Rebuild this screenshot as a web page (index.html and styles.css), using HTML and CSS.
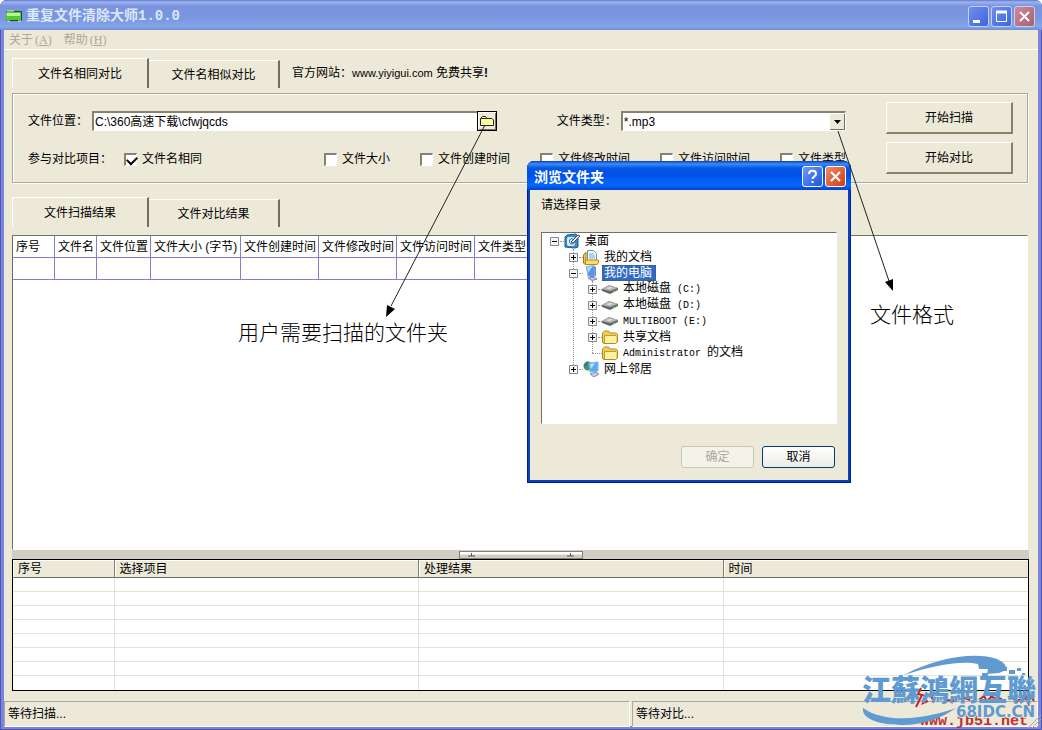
FILE: index.html
```html
<!DOCTYPE html>
<html lang="zh-CN">
<head>
<meta charset="utf-8">
<title>重复文件清除大师1.0.0</title>
<link rel="stylesheet" href="styles.css">
</head>
<body>
<div class="window">
  <header class="titlebar">
    <svg class="app-icon" width="16" height="12" viewBox="0 0 16 12"><rect x="0" y="1" width="16" height="10" rx="1" fill="#254c22"/><rect x="0" y="2" width="15" height="8" fill="#58c832"/><rect x="1" y="3" width="13" height="3" fill="#b8f49a"/><path d="M1 1h7M1 11h3M12 11h3" stroke="#d8ffd0"/></svg>
    <h1>重复文件清除大师1.0.0</h1>
    <div class="captions">
      <button class="cap" aria-label="最小化"><svg width="19" height="19"><path d="M4 14.500h7" stroke="#fff" stroke-width="3"/></svg></button>
      <button class="cap" aria-label="最大化"><svg width="19" height="19"><path d="M4.500 5v9.500h10V5" fill="none" stroke="#fff"/><path d="M4 5h11" stroke="#fff" stroke-width="3"/></svg></button>
      <button class="cap cap-close" aria-label="关闭"><svg width="19" height="19"><path d="M5 5l9 9M14 5l-9 9" stroke="#fff" stroke-width="2"/></svg></button>
    </div>
  </header>

  <div class="client">
    <nav class="menu">
      <button>关于<span class="key">(<u>A</u>)</span></button>
      <button>帮助<span class="key">(<u>H</u>)</span></button>
    </nav>

    <main class="content">
      <div class="tabs">
        <button class="tab active">文件名相同对比</button>
        <button class="tab">文件名相似对比</button>
        <p class="site">官方网站：<span class="latin">www.yiyigui.com</span> 免费共享<b>!</b></p>
      </div>

      <form class="group">
        <div class="fields">
          <div class="row">
            <label class="name" for="path">文件位置：</label>
            <input class="path" id="path" type="text" value="C:\360高速下载\cfwjqcds">
            <button class="browse" type="button" aria-label="浏览"><svg width="14" height="12" viewBox="0 0 14 12"><path d="M.5 10.500v-7l2-2h3l1.500 2h5l1.500 1.500v5.500z" fill="#ffff99" stroke="#222"/><path d="M1 3.500h7" stroke="#222"/></svg></button>
            <label class="name type" for="type">文件类型：</label>
            <div class="combo">
              <select id="type"><option>*.mp3</option></select>
              <span class="drop"><svg width="7" height="4"><path d="M0 0h7L3.500 4z"/></svg></span>
            </div>
          </div>
          <div class="checks">
            <span>参与对比项目：</span>
            <label><input type="checkbox" checked>文件名相同</label>
            <label><input type="checkbox">文件大小</label>
            <label><input type="checkbox">文件创建时间</label>
            <label><input type="checkbox">文件修改时间</label>
            <label><input type="checkbox">文件访问时间</label>
            <label><input type="checkbox">文件类型</label>
          </div>
        </div>
        <div class="actions">
          <button type="button">开始扫描</button>
          <button type="button">开始对比</button>
        </div>
      </form>

      <div class="tabs">
        <button class="tab active">文件扫描结果</button>
        <button class="tab">文件对比结果</button>
      </div>

      <section class="results">
        <table class="scan">
          <colgroup><col class="c42"><col class="c42"><col class="c54"><col class="c90"><col class="c78"><col class="c78"><col class="c78"><col class="c78"></colgroup>
          <tr><th>序号</th><th>文件名</th><th>文件位置</th><th>文件大小 (字节)</th><th>文件创建时间</th><th>文件修改时间</th><th>文件访问时间</th><th>文件类型</th></tr>
          <tr><td></td><td></td><td></td><td></td><td></td><td></td><td></td><td></td></tr>
        </table>
      </section>

      <div class="splitter"><div class="grip">
        <svg width="7" height="4"><path d="M3.500 0v3M0 3h7" stroke="#555"/></svg>
        <svg width="7" height="4"><path d="M3.500 0v3M0 3h7" stroke="#555"/></svg>
      </div></div>

      <table class="log">
        <colgroup><col class="p10"><col class="p30"><col class="p30"><col class="p30"></colgroup>
        <thead><tr><th>序号</th><th>选择项目</th><th>处理结果</th><th>时间</th></tr></thead>
        <tbody>
          <tr><td></td><td></td><td></td><td></td></tr>
          <tr><td></td><td></td><td></td><td></td></tr>
          <tr><td></td><td></td><td></td><td></td></tr>
          <tr><td></td><td></td><td></td><td></td></tr>
          <tr><td></td><td></td><td></td><td></td></tr>
          <tr><td></td><td></td><td></td><td></td></tr>
          <tr><td></td><td></td><td></td><td></td></tr>
          <tr><td></td><td></td><td></td><td></td></tr>
        </tbody>
      </table>
    </main>

    <footer class="status">
      <div class="scan-status">等待扫描...</div>
      <div class="compare-status">等待对比...</div>
    </footer>
  </div>

  <p class="note note-folder">用户需要扫描的文件夹</p>
  <p class="note note-format">文件格式</p>

  <section class="dialog" role="dialog" aria-labelledby="dlg-title">
    <header class="dlg-title">
      <h2 id="dlg-title">浏览文件夹</h2>
      <button class="cap cap-help" aria-label="帮助"><svg width="19" height="19"><path d="M6 7c0-4.500 7-4.500 7 0 0 2.500-3.500 2.500-3.500 5M9.500 14v2" fill="none" stroke="#fff" stroke-width="2"/></svg></button>
      <button class="cap cap-red" aria-label="关闭"><svg width="19" height="19"><path d="M5 5l9 9M14 5l-9 9" stroke="#fff" stroke-width="2"/></svg></button>
    </header>
    <div class="dlg-body">
      <p>请选择目录</p>
      <div class="tree">
        <ul class="root">
          <li>
            <div class="node"><button class="exp" aria-label="折叠"><svg width="9" height="9"><path d="M2 4.500h5" stroke="#000"/></svg></button>
              <svg class="ico" width="16" height="16"><path d="M3 2l9-1 2 2v11l-3 1-10-1V4z" fill="#3b8bc4" stroke="#1c5c92"/><rect x="3" y="4" width="8" height="9" rx="2" fill="#d8effb"/><path d="M9 6c-4-2-5 5-1 5 3 0 3-4 0-4" fill="none" stroke="#1c6ba8"/><path d="M7 9l7-7 2 1-7 7z" fill="#f4f4f4" stroke="#446"/></svg><span class="text">桌面</span></div>
            <ul>
              <li><div class="node"><button class="exp" aria-label="展开"><svg width="9" height="9"><path d="M2 4.500h5M4.500 2v5" stroke="#000"/></svg></button>
                <svg class="ico" width="16" height="16"><path d="M.5 6L3 3v9h12v2l-1 1.500H2L.5 14z" fill="#f3c93d" stroke="#a87810"/><path d="M4.500 1.500h6l3 3v8h-9z" fill="#f5fbff" stroke="#6d91b4"/><path d="M6 5h5M6 7h6M6 9h6" stroke="#74a6cc"/><path d="M2.500 11h13v2.500l-1.500 2H2.500z" fill="#f9dd70" stroke="#b58a1c"/></svg><span class="text">我的文档</span></div></li>
              <li><div class="node"><button class="exp" aria-label="折叠"><svg width="9" height="9"><path d="M2 4.500h5" stroke="#000"/></svg></button>
                <svg class="ico" width="16" height="16"><path d="M3 1.500L11 .5l1 10-7 1z" fill="#4a9ae8" stroke="#a4b8d8"/><path d="M4 2l6-1-5 7z" fill="#a8dcff"/><path d="M11 1l2 1v9l-1 0z" fill="#7c84ba"/><path d="M7 11l4-1 1 3-4 1z" fill="#7c84ba"/><path d="M5 13l6-1 3 2-5 1.500z" fill="#c4c8e8" stroke="#8088b4"/></svg><span class="text selected">我的电脑</span></div>
                <ul>
                  <li><div class="node"><button class="exp" aria-label="展开"><svg width="9" height="9"><path d="M2 4.500h5M4.500 2v5" stroke="#000"/></svg></button>
                    <svg class="ico" width="16" height="16"><path d="M0 8l7-4 9 3v2l-8 4-8-3z" fill="#666"/><path d="M0 8l7-4 9 3-8 3z" fill="#b4b4b4"/><path d="M4 7l4-1 3 1-4 1z" fill="#e4e4e4"/><path d="M11 11l3-1" stroke="#7ce05c"/></svg><span class="text">本地磁盘<span class="mono"> (C:)</span></span></div></li>
                  <li><div class="node"><button class="exp" aria-label="展开"><svg width="9" height="9"><path d="M2 4.500h5M4.500 2v5" stroke="#000"/></svg></button>
                    <svg class="ico" width="16" height="16"><path d="M0 8l7-4 9 3v2l-8 4-8-3z" fill="#666"/><path d="M0 8l7-4 9 3-8 3z" fill="#b4b4b4"/><path d="M4 7l4-1 3 1-4 1z" fill="#e4e4e4"/><path d="M11 11l3-1" stroke="#7ce05c"/></svg><span class="text">本地磁盘<span class="mono"> (D:)</span></span></div></li>
                  <li><div class="node"><button class="exp" aria-label="展开"><svg width="9" height="9"><path d="M2 4.500h5M4.500 2v5" stroke="#000"/></svg></button>
                    <svg class="ico" width="16" height="16"><path d="M0 8l7-4 9 3v2l-8 4-8-3z" fill="#666"/><path d="M0 8l7-4 9 3-8 3z" fill="#b4b4b4"/><path d="M4 7l4-1 3 1-4 1z" fill="#e4e4e4"/><path d="M11 11l3-1" stroke="#7ce05c"/></svg><span class="text"><span class="mono">MULTIBOOT (E:)</span></span></div></li>
                  <li><div class="node"><button class="exp" aria-label="展开"><svg width="9" height="9"><path d="M2 4.500h5M4.500 2v5" stroke="#000"/></svg></button>
                    <svg class="ico" width="16" height="16"><path d="M.5 13V4l2-2h4l1.500 2h6l1.500 1.500V13l-2 1.500h-12z" fill="#f0cf55" stroke="#b08a20"/><path d="M2.500 14V7h11.500v7z" fill="#fff0a0"/><path d="M2.500 14V6.500H14" fill="none" stroke="#c09a30"/></svg><span class="text">共享文档</span></div></li>
                  <li><div class="node"><span class="branch"></span>
                    <svg class="ico" width="16" height="16"><path d="M.5 13V4l2-2h4l1.500 2h6l1.500 1.500V13l-2 1.500h-12z" fill="#f0cf55" stroke="#b08a20"/><path d="M2.500 14V7h11.500v7z" fill="#fff0a0"/><path d="M2.500 14V6.500H14" fill="none" stroke="#c09a30"/></svg><span class="text"><span class="mono">Administrator </span>的文档</span></div></li>
                </ul>
              </li>
              <li><div class="node"><button class="exp" aria-label="展开"><svg width="9" height="9"><path d="M2 4.500h5M4.500 2v5" stroke="#000"/></svg></button>
                <svg class="ico" width="16" height="16"><circle cx="5" cy="5" r="4.500" fill="#3c9c50"/><path d="M1 5c3-1 3-3 4-4" stroke="#3570c8" stroke-width="2" fill="none"/><path d="M6 2l9-1v9l-8 1z" fill="#56aef0" stroke="#8cb0dc"/><path d="M7 3l5-1-4 6z" fill="#b4e4ff"/><path d="M7 13l6-2 3 2-5 3z" fill="#c8c8e8" stroke="#8888b8"/></svg><span class="text">网上邻居</span></div></li>
            </ul>
          </li>
        </ul>
      </div>
      <div class="dlg-buttons"><button disabled>确定</button><button class="default">取消</button></div>
    </div>
  </section>

  <svg class="arrows" width="1042" height="730">
    <path d="M485 125L391 306M838 131L889 281" stroke="#222" fill="none"/>
    <path d="M386 317l1-12 8 4zM893 291l-8-9 8-3z"/>
  </svg>

  <svg class="mark" width="180" height="76" viewBox="0 0 180 76">
    <path d="M59 34l-3 6 4 1-6 12M61 41l3 2-3 6 5-2M68 40l3 6M83 46l12 1M100 43l8 3M117 46l5-4 3 5 6-6M128 43l12 2M150 44l6 4M156 46l14-2 2 3M163 40l4 12" stroke="#d02020" stroke-width="2" fill="none"/>
    <text class="mark-url" x="58" y="71" fill="#c03030">www.jb51.net</text>
    <g fill="#5f9bd0">
      <path d="M42 21C72 5 108-2 132 4c9 3 13 7 12 12l-7 3-12 1 1-5h-9l-1-5C98 6 70 12 42 21z"/>
      <path d="M127 15h8v4h-8zM139 13h6v4h-6zM147 16h6v4h-6zM155 14h4v3h-4zM160 19h3v2h-3zM120 19h6v4h-6z"/>
      <path d="M1 54c14 10 36 12 56 9 15-2 26-5 37-9-14 10-33 17-54 17C18 71-1 65 1 54z"/>
      <text class="mark-name" x="0" y="47">江蘇鴻網互聯</text>
      <text class="mark-domain" x="94" y="63" stroke="#ece9d8" stroke-width="2" paint-order="stroke">68IDC.CN</text>
    </g>
    <path d="M179 65l-9 9M179 69l-5 5M179 61l-13 13" stroke="#aca899"/>
  </svg>
</div>
</body>
</html>
```

FILE: styles.css
```css
* { box-sizing: border-box; }
body, p, h1, h2, ul { margin: 0; padding: 0; }
ul { list-style: none; }
body, button, input, select {
  font-family: "Liberation Sans", "Noto Sans CJK SC", sans-serif;
  font-size: 12px;
  line-height: 16px;
  color: #000;
}
button { padding: 0; background: #ece9d8; border: 0; }
svg { display: block; }

.window {
  position: relative;
  display: flex;
  flex-direction: column;
  min-height: 100vh;
  padding: 0 4px 4px;
  background: #7b84da;
  border-radius: 7px 7px 0 0;
  box-shadow: inset 0 0 0 1px #4d57b6;
  overflow: hidden;
}
.titlebar {
  display: flex;
  align-items: center;
  height: 30px;
  margin: 0 -4px;
  padding: 2px 7px 0 6px;
  gap: 4px;
  background: linear-gradient(#6377c8 0, #9cb4f0 2px, #7a93dd 6px, #7a96df 18px, #83a6e8 27px, #7288d2 30px);
}
.titlebar h1 {
  flex: 1;
  font: bold 14px/20px "Liberation Mono", "Noto Sans CJK SC", monospace;
  color: #dce6fb;
}
.captions { display: flex; gap: 2px; }
.cap {
  width: 21px;
  height: 21px;
  border: 1px solid #c5d0f5;
  border-radius: 3px;
  background: linear-gradient(135deg, #6f8df0, #3f66dd);
}
.cap-close { background: linear-gradient(135deg, #cc8c98, #a8606e); }
.cap-help { border-color: #fff; background: linear-gradient(135deg, #6c9bf8, #1f55d8); }
.cap-red { border-color: #fff; background: linear-gradient(135deg, #f08a68, #d03c14); }

.client { flex: 1; display: flex; flex-direction: column; background: #ece9d8; }
.menu {
  display: flex;
  gap: 12px;
  height: 20px;
  padding-left: 5px;
  border-bottom: 1px solid #fff;
}
.menu button { color: #aca899; }
.key { font-family: "Liberation Serif", serif; padding-left: 2px; }

.content { flex: 1; display: flex; flex-direction: column; padding: 8px 9px 10px 8px; }
.tabs { display: flex; align-items: flex-end; height: 30px; }
.tab {
  height: 28px;
  width: 131px;
  border: solid;
  border-width: 1px 2px 0 0;
  border-color: #fff #716f64 #fff #fff;
}
.tab.active { height: 30px; width: 137px; border-left-width: 1px; }
.site { align-self: center; padding-left: 12px; }
.latin { font-size: 11px; }

.group {
  display: flex;
  gap: 40px;
  margin: 5px 1px 14px 0;
  padding: 8px 14px 8px 15px;
  border: 1px solid #aca899;
  box-shadow: inset 1px 1px #fff, 1px 1px #fff;
}
.fields { flex: 1; padding-top: 9px; }
.row { display: flex; height: 20px; }
.name { width: 64px; line-height: 20px; }
.name.type { margin-left: 60px; }
.path, .combo {
  min-width: 0;
  border: 1px solid #fff;
  border-top: 2px solid #85836f;
  border-left: 2px solid #85836f;
  background: #fff;
}
.path { flex: 384 1 0; padding: 0 1px; border-right: 0; outline: 0; }
.browse {
  display: grid;
  place-items: center;
  width: 20px;
  border: 1px solid #000;
  box-shadow: inset 1px 1px #fff, inset -1px -1px #716f64;
}
.combo { flex: 224 1 0; display: grid; grid-template-columns: 1fr 16px; }
.combo select {
  grid-area: 1 / 1 / 2 / 3;
  min-width: 0;
  padding: 0 1px;
  border: 0;
  appearance: none;
  background: #fff;
}
.drop {
  grid-area: 1 / 2;
  display: grid;
  place-items: center;
  pointer-events: none;
  background: #ece9d8;
  box-shadow: inset 1px 1px #fff, inset -1px -1px #716f64;
}
.checks {
  display: grid;
  grid-template-columns: 96px 200px 96px 120px 120px 120px 1fr;
  padding-top: 20px;
  white-space: nowrap;
}
.checks label { display: flex; align-items: center; gap: 5px; }
.checks input {
  appearance: none;
  width: 13px;
  height: 13px;
  margin: 0;
  border: 1px solid #fff;
  border-top: 2px solid #85836f;
  border-left: 2px solid #85836f;
  background: #fff;
}
.checks input:checked::before {
  content: "";
  display: block;
  width: 8px;
  height: 5px;
  margin: 1px;
  border: solid #000;
  border-width: 0 0 2px 2px;
  transform: rotate(-45deg);
}
.actions { display: flex; flex-direction: column; gap: 8px; width: 130px; }
.actions button {
  flex: 1;
  min-height: 32px;
  border: solid;
  border-width: 1px 2px 2px 1px;
  border-color: #fff #85836f #85836f #fff;
}

.results {
  flex: 1;
  margin: 8px 1px 0 0;
  background: #fff;
  border: 1px solid #fff;
  border-top-color: #716f64;
  border-left-color: #716f64;
}
.scan { table-layout: fixed; border-collapse: separate; border-spacing: 0; width: 540px; }
.c42 { width: 42px; }
.c54 { width: 54px; }
.c90 { width: 90px; }
.c78 { width: 78px; }
.scan th, .scan td {
  height: 22px;
  padding: 0 0 0 3px;
  border-right: 1px solid #8080c8;
  border-bottom: 1px solid #8080c8;
  font-weight: normal;
  text-align: left;
  white-space: nowrap;
}
.splitter { display: flex; justify-content: center; height: 9px; padding-top: 1px; background: #d0cec4; }
.grip {
  display: flex;
  justify-content: space-between;
  width: 124px;
  padding: 1px 8px;
  border: 1px solid #85836f;
  background: linear-gradient(#fff 2px, #d0cec4 3px);
}
.log { table-layout: fixed; border-collapse: separate; border-spacing: 0; width: 100%; background: #fff; border: 1px solid #000; }
.p10 { width: 10%; }
.p30 { width: 30%; }
.log th {
  height: 18px;
  padding: 0 5px;
  border-right: 1px solid #85836f;
  border-bottom: 1px solid #716f64;
  background: #ece9d8;
  box-shadow: inset 1px 1px #fff;
  font-weight: normal;
  text-align: left;
}
.log td { height: 14px; padding: 0; border-right: 1px solid #e4e2d6; border-bottom: 1px solid #e4e2d6; }
.log th:last-child, .log td:last-child { border-right: 0; }
.log tbody tr:last-child td { border-bottom: 0; }

.status { display: grid; grid-template-columns: 626fr 406fr; gap: 2px; height: 25px; }
.status div { padding: 4px 3px; border: solid; border-width: 1px; border-color: #aca899 #fff #fff #aca899; }

.note { position: absolute; font: 300 21px/28px "Noto Sans CJK SC", sans-serif; white-space: nowrap; }
.note-folder { left: 238px; top: 317px; }
.note-format { left: 870px; top: 299px; }
.arrows, .mark { position: absolute; pointer-events: none; }
.arrows { left: 0; top: 0; }

.dialog {
  position: absolute;
  left: 527px;
  top: 161px;
  width: 324px;
  padding: 0 3px 3px;
  border-radius: 7px 7px 0 0;
  background: #0842b8;
  box-shadow: inset 0 0 0 1px #001c94;
}
.dlg-title {
  display: flex;
  align-items: center;
  gap: 2px;
  height: 29px;
  margin: 0 -3px;
  padding: 1px 5px 0 7px;
  border-radius: 7px 7px 0 0;
  background: linear-gradient(#0a40c0 0, #3d8cf8 3px, #0458e4 7px, #0050e4 14px, #0468fc 24px, #0042d0 29px);
}
.dlg-title h2 {
  flex: 1;
  font: bold 14px/20px "Noto Sans CJK SC", sans-serif;
  color: #fff;
}
.dlg-body { padding: 7px 11px 12px; background: #ece9d8; }
.tree {
  height: 192px;
  margin-top: 19px;
  background: #fff;
  border: 1px solid #fff;
  border-top-color: #716f64;
  border-left-color: #716f64;
}
.root { padding-left: 8px; }
.root ul { position: relative; padding-left: 19px; }
.root ul::before {
  content: "";
  position: absolute;
  left: 4px;
  top: 0;
  bottom: 8px;
  border-left: 1px dotted #999;
}
.root ul::before { left: 23px; }
.node { position: relative; display: flex; align-items: center; height: 16px; white-space: nowrap; }
.exp {
  width: 9px;
  height: 9px;
  border-radius: 1px;
  background: #f4f4f0;
  box-shadow: inset 0 0 0 1px #7b8ca0;
}
.branch { width: 5px; margin-left: 4px; }
.exp::after, .branch::after {
  content: "";
  position: absolute;
  left: 10px;
  top: 8px;
  width: 4px;
  border-top: 1px dotted #999;
}
.branch::after { left: 4px; width: 10px; }
.ico { margin: 0 3px 0 5px; }
.text { padding: 0 2px; }
.selected { background: #316ac5; color: #fff; outline: 1px dotted #555; outline-offset: -1px; padding-right: 4px; }
.mono { font-family: "Liberation Mono", monospace; font-size: 10px; white-space: pre; }
.dlg-buttons { display: flex; justify-content: flex-end; gap: 8px; margin-top: 22px; padding-right: 2px; }
.dlg-buttons button { width: 73px; height: 22px; border: 1px solid #003c74; border-radius: 3px; background: linear-gradient(#fff, #ecebe5); }
.dlg-buttons button:disabled { color: #aca899; border-color: #c9c7ba; background: #f4f3ea; }

.mark { right: 0; bottom: 0; }
.mark-url { font: bold 15px "Liberation Mono", monospace; }
.mark-name { font: 900 29px "Noto Sans CJK TC", sans-serif; }
.mark-domain { font: bold 15px "DejaVu Sans", sans-serif; }
```
